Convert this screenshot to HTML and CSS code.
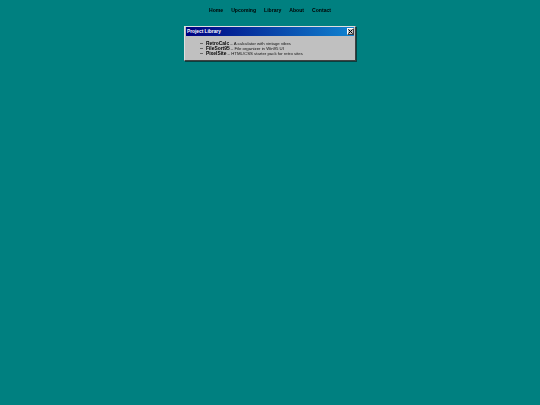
FILE: index.html
```html
<!DOCTYPE html>
<html lang="en">
<head>
    <meta charset="UTF-8">
    <title>Project Library</title>
    <link rel="stylesheet" href="styles.css">
</head>
<body>
    <nav class="nav">
        <a href="#">Home</a>
        <a href="#">Upcoming</a>
        <a href="#">Library</a>
        <a href="#">About</a>
        <a href="#">Contact</a>
    </nav>

    <div class="window">
        <div class="title-bar">
            <span>Project Library</span>
            <button class="close-btn" aria-label="Close">
                <svg viewBox="0 0 6 6" width="5" height="5"><path d="M0.5 0.5L5.5 5.5M5.5 0.5L0.5 5.5" stroke="#000" stroke-width="1.2"/></svg>
            </button>
        </div>
        <ul class="projects">
            <li><b>RetroCalc</b> – A calculator with vintage vibes</li>
            <li><b>FileSort95</b> – File organizer in Win95 UI</li>
            <li><b>PixelSite</b> – HTML/CSS starter pack for retro sites</li>
        </ul>
    </div>
</body>
</html>
```

FILE: styles.css
```css
body {
    margin: 0;
    min-height: 405px;
    background: #008080;
    font-family: "Liberation Sans", Arial, sans-serif;
    color: #000;
}

.nav {
    display: flex;
    justify-content: center;
    gap: 8px;
    padding-top: 7px;
    height: 20px;
    box-sizing: border-box;
    font-size: 5.1px;
    line-height: 6px;
    font-weight: bold;
    filter: blur(0.35px);
}

.nav a {
    color: #000;
    text-decoration: none;
}

.window {
    width: 172px;
    height: 35px;
    box-sizing: border-box;
    margin: 6px auto 0;
    background: #c0c0c0;
    border: 1px solid;
    border-color: #dfdfdf #404040 #404040 #dfdfdf;
    box-shadow: 1px 1px 0 #0a3f3f;
    filter: blur(0.35px);
}

.title-bar {
    display: flex;
    justify-content: space-between;
    align-items: center;
    height: 9px;
    margin: 0 1px;
    padding: 0 0 0 1px;
    background: linear-gradient(to right, #000080, #1084d0);
    color: #fff;
    font-size: 4.8px;
    font-weight: bold;
}

.close-btn {
    display: flex;
    align-items: center;
    justify-content: center;
    width: 7px;
    height: 7px;
    padding: 0;
    background: #c0c0c0;
    border: 1px solid;
    border-color: #fff #404040 #404040 #fff;
}

.projects {
    margin: 0;
    padding: 5px 0 0 21px;
    list-style: none;
    font-size: 4.3px;
    line-height: 5px;
    color: #111;
}

.projects li::before {
    content: "";
    display: inline-block;
    width: 3px;
    height: 1px;
    margin-left: -6px;
    margin-right: 3px;
    vertical-align: 1.5px;
    background: #666;
}

.projects b {
    font-size: 4.9px;
    color: #000;
}
```
